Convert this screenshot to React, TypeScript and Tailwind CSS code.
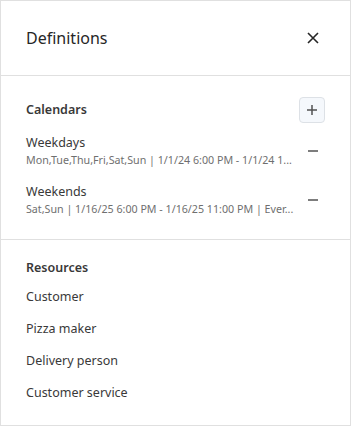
import React from "react";

const font = { fontFamily: '"Noto Sans", "Open Sans", sans-serif' };

function Minus() {
  return (
    <button className="w-[25px] h-[25px] flex items-center justify-center shrink-0">
      <svg width="12" height="12" viewBox="0 0 12 12">
        <line x1="1" y1="6" x2="11" y2="6" stroke="#525252" strokeWidth="1.5" />
      </svg>
    </button>
  );
}

export default function App() {
  const calendars = [
    { name: "Weekdays", desc: "Mon,Tue,Thu,Fri,Sat,Sun | 1/1/24 6:00 PM - 1/1/24 1..." },
    { name: "Weekends", desc: "Sat,Sun | 1/16/25 6:00 PM - 1/16/25 11:00 PM | Ever..." },
  ];
  const resources = ["Customer", "Pizza maker", "Delivery person", "Customer service"];
  return (
    <div className="w-[351px] h-[426px] bg-white border border-[#e0e0e0] flex flex-col" style={font}>
      <div className="h-[75px] shrink-0 flex items-center justify-between pl-[25px] pr-[25px] border-b border-[#e0e0e0]">
        <span className="text-[16px] text-[#262626]">Definitions</span>
        <svg width="12" height="12" viewBox="0 0 12 12" className="mr-[6px]">
          <path d="M1 1 L11 11 M11 1 L1 11" stroke="#262626" strokeWidth="1.6" />
        </svg>
      </div>
      <div className="px-[25px] pt-[21px] pb-[22px] border-b border-[#e0e0e0]">
        <div className="flex items-center justify-between">
          <span className="text-[12.5px] font-semibold text-[#393939]">Calendars</span>
          <button className="w-[26px] h-[26px] rounded-[4px] border border-[#dde1e6] bg-[#f5f8fc] flex items-center justify-center">
            <svg width="12" height="12" viewBox="0 0 12 12">
              <path d="M6 1 V11 M1 6 H11" stroke="#525252" strokeWidth="1.5" />
            </svg>
          </button>
        </div>
        <div className="flex flex-col gap-[15px] mt-[11px]">
          {calendars.map((c) => (
            <div key={c.name} className="flex items-center">
              <div className="flex-1 min-w-0">
                <div className="text-[12.5px] text-[#393939] leading-[18px]">{c.name}</div>
                <div className="text-[10.7px] text-[#6f6f6f] leading-[16px] whitespace-nowrap">{c.desc}</div>
              </div>
              <Minus />
            </div>
          ))}
        </div>
      </div>
      <div className="px-[25px] pt-[19px]">
        <div className="text-[12.5px] font-semibold text-[#393939] leading-[18px]">Resources</div>
        <div className="flex flex-col mt-[4px]">
          {resources.map((r) => (
            <div key={r} className="text-[12.5px] text-[#393939] h-[32px] flex items-center">{r}</div>
          ))}
        </div>
      </div>
    </div>
  );
}
